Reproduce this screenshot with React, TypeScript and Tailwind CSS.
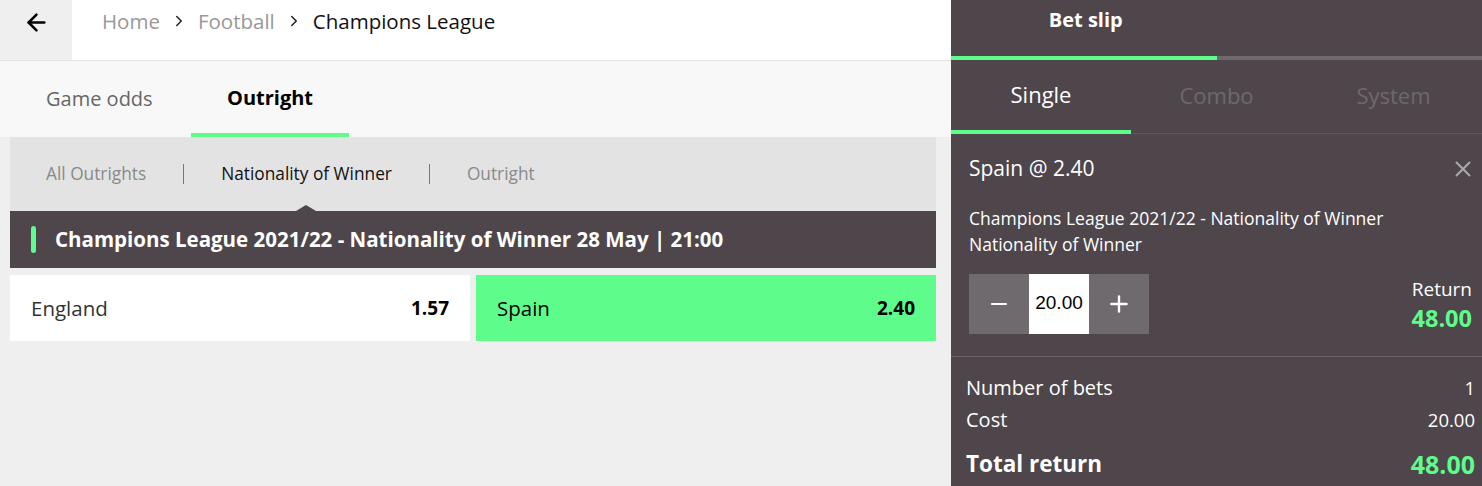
import { ArrowLeft, ChevronRight, X, Minus, Plus } from 'lucide-react';

const font = { fontFamily: '"Open Sans", Lato, sans-serif' };

function Breadcrumb() {
  return (
    <div className="flex h-[42px] items-center gap-[10px] self-start pl-[30px] text-[20.5px] text-[#999]">
      <span>Home</span>
      <ChevronRight size={18} strokeWidth={2} className="text-[#222]" />
      <span>Football</span>
      <ChevronRight size={18} strokeWidth={2} className="text-[#222]" />
      <span className="text-[#111]">Champions League</span>
    </div>
  );
}

function SubTabs() {
  return (
    <div className="relative flex h-[74px] items-center bg-[#e3e3e3] text-[17.3px]">
      <span className="pl-[36px] text-[#8a8a8a]">All Outrights</span>
      <span className="mx-[37px] h-[20px] w-px bg-[#777]" />
      <span className="text-[#111]">Nationality of Winner</span>
      <span className="mx-[37px] h-[20px] w-px bg-[#777]" />
      <span className="text-[#8a8a8a]">Outright</span>
      <span className="absolute bottom-0 left-[286px] h-0 w-0 border-x-[10px] border-b-[6px] border-x-transparent border-b-[#4e464b]" />
    </div>
  );
}

function OddsButton({ name, odds, active }: { name: string; odds: string; active?: boolean }) {
  return (
    <div className={`flex flex-1 items-center justify-between px-[21px] text-[20.5px] ${active ? 'bg-[#5dfc8b] text-black' : 'bg-white text-[#333]'}`}>
      <span>{name}</span>
      <span className="text-[19px] font-bold text-black">{odds}</span>
    </div>
  );
}

function SummaryRow({ label, value }: { label: string; value: string }) {
  return (
    <div className="flex items-center justify-between text-[20px] leading-[27px] text-white">
      <span>{label}</span>
      <span className="text-[18.5px]">{value}</span>
    </div>
  );
}

export default function App() {
  return (
    <div style={font} className="flex h-[486px] w-[1482px] overflow-hidden">
      <main className="flex w-[951px] flex-col bg-[#efefef]">
        <header className="flex h-[61px] items-stretch border-b border-[#e2e2e2] bg-white">
          <button className="flex w-[72px] justify-center bg-[#efefef] pt-[9px]">
            <ArrowLeft size={27} strokeWidth={2.2} className="text-black" />
          </button>
          <Breadcrumb />
        </header>

        <nav className="flex h-[76px] items-stretch bg-[#f8f8f8] text-[20px]">
          <div className="flex w-[191px] items-center pl-[46px] text-[#666]">Game odds</div>
          <div className="flex w-[158px] items-center justify-center border-b-4 border-[#5dfc8b] pt-[2px] font-bold text-black">Outright</div>
        </nav>

        <section className="pl-[10px] pr-[15px]">
          <SubTabs />
          <div className="flex h-[57px] items-center bg-[#4e464b] pl-[21px]">
            <span className="h-[27px] w-[5px] rounded-full bg-[#5dfc8b]" />
            <h2 className="pl-[19px] text-[20.5px] font-bold text-white">
              Champions League 2021/22 - Nationality of Winner 28 May | 21:00
            </h2>
          </div>
          <div className="mt-[7px] flex h-[66px] gap-[6px]">
            <OddsButton name="England" odds="1.57" />
            <OddsButton name="Spain" odds="2.40" active />
          </div>
        </section>
      </main>

      <aside className="flex flex-1 flex-col bg-[#4e464b] text-white">
        <div className="grid h-[56px] grid-cols-2">
          <div className="flex items-center justify-center pb-[16px] pl-[4px] text-[20px] font-bold">Bet slip</div>
          <div />
        </div>
        <div className="flex h-[4px]">
          <div className="w-1/2 bg-[#5dfc8b]" />
          <div className="w-1/2 bg-[#6f6a6d]" />
        </div>

        <div className="grid h-[74px] grid-cols-3 border-b border-[#5f575c] text-[22px]">
          <div className="-mb-px flex w-[180px] items-center justify-center border-b-4 border-[#5dfc8b] pb-[2px]">Single</div>
          <div className="flex items-center justify-center pb-[2px] text-[#6e686b]">Combo</div>
          <div className="flex items-center justify-center pb-[2px] text-[#6e686b]">System</div>
        </div>

        <div className="border-b border-[#6a6266] px-[18px] pb-[22px]">
          <div className="flex items-center justify-between pt-[19px]">
            <span className="text-[21px]">Spain @ 2.40</span>
            <X size={26} strokeWidth={1.8} className="-mr-[12px] text-[#aaa]" />
          </div>
          <p className="mt-[20px] text-[17.5px] leading-[26px]">
            Champions League 2021/22 - Nationality of Winner
            <br />
            Nationality of Winner
          </p>
          <div className="mt-[17px] flex items-center justify-between">
            <div className="flex h-[60px]">
              <button className="flex w-[60px] items-center justify-center bg-[#6f6a6d]">
                <Minus size={24} strokeWidth={2.2} />
              </button>
              <div className="flex w-[60px] items-center justify-center bg-white text-[19px] text-black" style={{ fontFamily: '"Liberation Sans", sans-serif' }}>
                20.00
              </div>
              <button className="flex w-[60px] items-center justify-center bg-[#6f6a6d]">
                <Plus size={26} strokeWidth={2.2} />
              </button>
            </div>
            <div className="-mr-[8px] flex flex-col items-end gap-[1px] pt-[2px]">
              <span className="text-[19px] leading-[26px]">Return</span>
              <span className="text-[23.5px] font-bold leading-[30px] text-[#5dfc8b]">48.00</span>
            </div>
          </div>
        </div>

        <div className="flex flex-col gap-[5px] pl-[15px] pr-[7px] pt-[17px]">
          <SummaryRow label="Number of bets" value="1" />
          <SummaryRow label="Cost" value="20.00" />
          <div className="mt-[11px] flex items-center justify-between leading-[30px]">
            <span className="text-[22.5px] font-bold">Total return</span>
            <span className="text-[25px] font-bold text-[#5dfc8b]">48.00</span>
          </div>
        </div>
      </aside>
    </div>
  );
}
